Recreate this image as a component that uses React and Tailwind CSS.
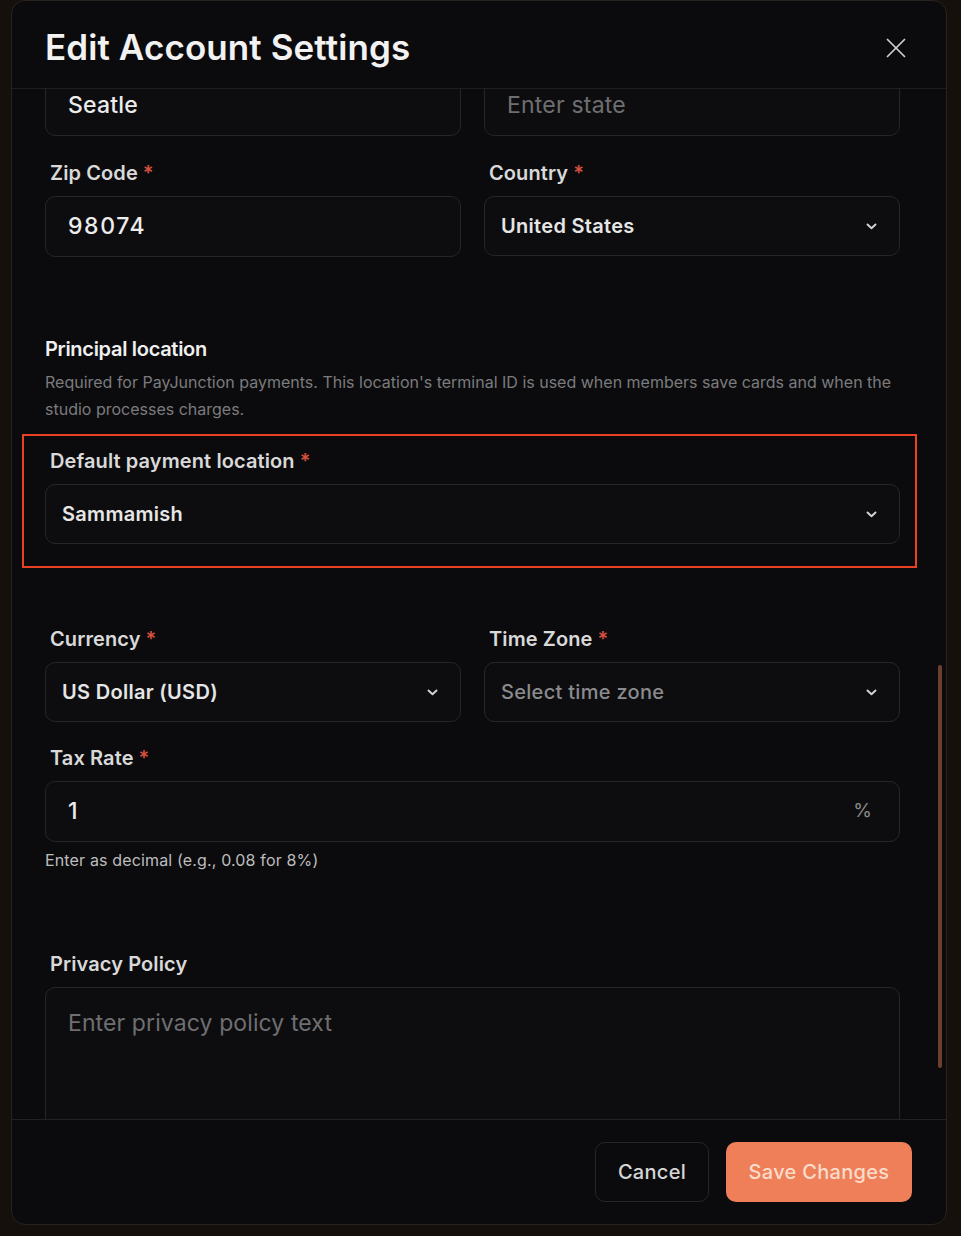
import { X } from "lucide-react";

// ─── Small chevron used by the selects ───────────────────────────────────────
function Chevron() {
  return (
    <svg width="11" height="7" viewBox="0 0 11 7" fill="none" className="shrink-0">
      <path d="M1.5 1.5 L5.5 5.2 L9.5 1.5" stroke="#d4d4d4" strokeWidth="1.9" strokeLinecap="round" strokeLinejoin="round" />
    </svg>
  );
}

// ─── Label ───────────────────────────────────────────────────────────────────
function Label({ children, required }) {
  return (
    <div className="h-6 mb-[11px] pl-[5px] text-[20px] leading-6 font-semibold text-[#d9d9d9] tracking-[0.1px]">
      {children}
      {required && <span className="ml-[5px] text-[#d4503f]">*</span>}
    </div>
  );
}

// ─── Input / Select ──────────────────────────────────────────────────────────
function Input({ value, placeholder, suffix, wide }) {
  return (
    <div className="h-[61px] rounded-[10px] border border-[#26262a] bg-[#0d0d0f] pl-[22px] pr-[27px] flex items-center justify-between">
      {value ? (
        <span className={wide ? "text-[23px] font-medium text-[#ececec] tracking-[1.6px]" : "text-[23px] font-medium text-[#ececec] tracking-[0.2px]"}>
          {value}
        </span>
      ) : (
        <span className="text-[23px] text-[#6f6f72] tracking-[0.2px]">{placeholder}</span>
      )}
      {suffix && <span className="text-[19px] text-[#8a8a8a]">{suffix}</span>}
    </div>
  );
}

function Select({ value, placeholder }) {
  return (
    <div className="h-[60px] rounded-[10px] border border-[#26262a] bg-[#0d0d0f] pl-4 pr-[22px] flex items-center justify-between">
      {value ? (
        <span className="text-[20px] font-semibold text-[#e6e6e6] tracking-[0.3px]">{value}</span>
      ) : (
        <span className="text-[20px] font-medium text-[#8b8b8e] tracking-[0.3px]">{placeholder}</span>
      )}
      <Chevron />
    </div>
  );
}

function Field({ label, required, children }) {
  return (
    <div className="flex flex-col">
      <Label required={required}>{label}</Label>
      {children}
    </div>
  );
}

// ─── Page ────────────────────────────────────────────────────────────────────
export default function App() {
  return (
    <div
      className="min-h-screen w-full bg-[#16100d] pl-[11px] pb-[11px]"
      style={{ fontFamily: "Inter, 'Noto Sans', sans-serif" }}
    >
      <div className="w-[936px] h-[1225px] rounded-[14px] border border-[#29231f] bg-[#0b0b0d] flex flex-col overflow-hidden">

        {/* Header */}
        <div className="h-[88px] shrink-0 flex items-center justify-between pl-[33px] pr-[33px] pt-[6px] border-b border-[#1e1e21]">
          <h2 className="text-[35px] font-semibold text-[#f2f2f2] tracking-[0.1px]">Edit Account Settings</h2>
          <X size={34} strokeWidth={1.2} color="#cfcfcf" />
        </div>

        {/* Scrolled body (City / State labels are scrolled out of view) */}
        <div className="relative flex-1 overflow-hidden">
          <div className="pl-[33px] pr-[46px] -mt-[14px]">

            {/* City / State */}
            <div className="grid grid-cols-2 gap-[23px]">
              <Input value="Seatle" />
              <Input placeholder="Enter state" />
            </div>

            {/* Zip / Country */}
            <div className="grid grid-cols-2 gap-[23px] mt-[25px]">
              <Field label="Zip Code" required>
                <Input value="98074" wide />
              </Field>
              <Field label="Country" required>
                <Select value="United States" />
              </Field>
            </div>

            {/* Principal location */}
            <div className="mt-[80px]">
              <h3 className="text-[20px] leading-6 font-semibold text-[#f0f0f0] tracking-[-0.3px]">Principal location</h3>
              <p className="mt-2 text-[16px] leading-[27px] text-[#7b7b7e]">
                Required for PayJunction payments. This location's terminal ID is used when members save cards and when the studio processes charges.
              </p>
            </div>

            <div className="relative mt-[26px]">
              <Field label="Default payment location" required>
                <Select value="Sammamish" />
              </Field>
              <div className="absolute -left-[23px] -right-[17px] -top-[15px] -bottom-[24px] border-2 border-[#ea4124] pointer-events-none" />
            </div>

            {/* Currency / Time zone */}
            <div className="grid grid-cols-2 gap-[23px] mt-[83px]">
              <Field label="Currency" required>
                <Select value="US Dollar (USD)" />
              </Field>
              <Field label="Time Zone" required>
                <Select placeholder="Select time zone" />
              </Field>
            </div>

            {/* Tax rate */}
            <div className="mt-[24px]">
              <Field label="Tax Rate" required>
                <Input value="1" suffix="%" />
              </Field>
              <p className="mt-[7px] text-[16px] leading-[22px] text-[#bdbdbd] tracking-[0.15px]">Enter as decimal (e.g., 0.08 for 8%)</p>
            </div>

            {/* Privacy policy */}
            <div className="mt-[81px]">
              <Field label="Privacy Policy">
                <div className="h-[200px] rounded-[10px] border border-[#26262a] bg-[#0d0d0f] px-[22px] pt-[18px]">
                  <span className="text-[23px] text-[#6f6f72] tracking-[0.1px]">Enter privacy policy text</span>
                </div>
              </Field>
            </div>
          </div>

          {/* Scrollbar thumb */}
          <div className="absolute right-[4px] top-[576px] h-[403px] w-[4px] rounded-full bg-[#6c3e30]" />
        </div>

        {/* Footer */}
        <div className="shrink-0 border-t border-[#222225] px-[34px] py-[22px] flex justify-end gap-[17px]">
          <button className="w-[114px] h-[60px] rounded-[10px] border border-[#27272a] text-[20px] font-medium text-[#d6d6d6] tracking-[0.3px]">
            Cancel
          </button>
          <button className="w-[186px] h-[60px] rounded-[10px] bg-[#ee7f58] text-[20px] font-medium text-[#fbdccb] tracking-[0.3px]">
            Save Changes
          </button>
        </div>
      </div>
    </div>
  );
}
